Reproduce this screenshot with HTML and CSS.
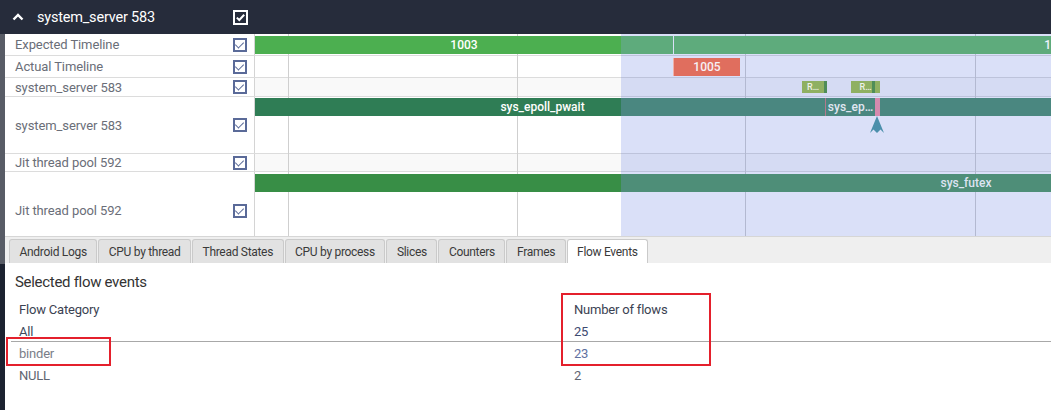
FILE: index.html
```html
<!DOCTYPE html>
<html>
<head>
<meta charset="utf-8">
<link rel="stylesheet" href="styles.css">
</head>
<body>
<div class="app">
  <div class="group-header">
    <div class="gh-label">
      <svg class="chev" width="12" height="8" viewBox="0 0 12 8"><polyline points="1.5,6.5 6,2 10.5,6.5" fill="none" stroke="#fff" stroke-width="2.4"/></svg>
      <span class="gh-title">system_server 583</span>
      <svg class="gh-check" width="15" height="15" viewBox="0 0 15 15"><rect x="1" y="1" width="13" height="13" fill="none" stroke="#fff" stroke-width="2"/><polyline points="3.8,7.6 6.3,10 11.2,4.8" fill="none" stroke="#fff" stroke-width="2"/></svg>
    </div>
  </div>
  <div class="body">
    <div class="edge"></div>
    <div class="main">
      <div class="tracks">
        <div class="row h22">
          <div class="label"><span>Expected Timeline</span><i class="cb"></i></div>
          <div class="canvas">
            <div class="slice s-exp1" style="left:0;width:418px">1003</div>
            <div class="slice s-exp2" style="left:419px;width:768px">1004</div>
          </div>
        </div>
        <div class="row h22">
          <div class="label"><span>Actual Timeline</span><i class="cb"></i></div>
          <div class="canvas">
            <div class="slice s-act" style="left:418px;width:67px">1005</div>
          </div>
        </div>
        <div class="row h19 small">
          <div class="label"><span>system_server 583</span><i class="cb"></i></div>
          <div class="canvas">
            <div class="slice s-run" style="left:547px;width:25px">R…</div>
            <div class="slice s-run s-run2" style="left:596px;width:29px">R…</div>
          </div>
        </div>
        <div class="row h57">
          <div class="label"><span>system_server 583</span><i class="cb"></i></div>
          <div class="canvas">
            <div class="slice s-epoll" style="left:-15px;width:585px">sys_epoll_pwait</div>
            <div class="slice s-teal s-ep2" style="left:570px;width:50px">sys_ep…</div>
            <div class="slice s-pink" style="left:620px;width:5px"></div>
            <div class="slice s-teal" style="left:625px;width:300px"></div>
            <svg class="flow-arrow" width="14" height="18" viewBox="0 0 14 18"><path d="M7 0 L14 17 L10.5 13.5 L7 17 L3.5 13.5 L0 17 Z" fill="#4b8fab"/></svg>
          </div>
        </div>
        <div class="row h18 small">
          <div class="label"><span>Jit thread pool 592</span><i class="cb"></i></div>
          <div class="canvas"></div>
        </div>
        <div class="row h64">
          <div class="label low"><span>Jit thread pool 592</span><i class="cb"></i></div>
          <div class="canvas">
            <div class="slice s-futex" style="left:0;width:1422px">sys_futex</div>
          </div>
        </div>
        <div class="lanes">
          <div class="gridline" style="left:33px"></div>
          <div class="gridline" style="left:262px"></div>
          <div class="gridline" style="left:490px"></div>
          <div class="gridline" style="left:720px"></div>
          <div class="selection"></div>
        </div>
      </div>
      <div class="panel">
        <div class="tabbar">
          <div class="tab">Android Logs</div>
          <div class="tab">CPU by thread</div>
          <div class="tab">Thread States</div>
          <div class="tab">CPU by process</div>
          <div class="tab">Slices</div>
          <div class="tab">Counters</div>
          <div class="tab">Frames</div>
          <div class="tab active">Flow Events</div>
        </div>
        <div class="content">
          <div class="title">Selected flow events</div>
          <div class="table">
            <div class="tr th"><div class="c1">Flow Category</div><div class="c2">Number of flows</div></div>
            <div class="tr r-all"><div class="c1">All</div><div class="c2 n1">25</div></div>
            <div class="tr r-binder"><div class="c1">binder</div><div class="c2 n2">23</div></div>
            <div class="tr r-null"><div class="c1">NULL</div><div class="c2">2</div></div>
          </div>
        </div>
      </div>
    </div>
  </div>
  <div class="mark mark1"></div>
  <div class="mark mark2"></div>
</div>
</body>
</html>
```

FILE: styles.css
```css
* { box-sizing: border-box; }
html, body { margin: 0; padding: 0; }
body {
  width: 1051px;
  height: 410px;
  overflow: hidden;
  font-family: Roboto, "Liberation Sans", sans-serif;
  background: #fff;
}
.app { position: relative; width: 1051px; height: 410px; }

.group-header {
  height: 34px;
  background: #262c3b;
  display: flex;
  align-items: center;
}
.gh-label {
  width: 254px;
  display: flex;
  align-items: center;
  height: 34px;
  position: relative;
}
.chev { margin-left: 12px; margin-right: 13px; }
.gh-title { color: #fff; font-size: 14.5px; letter-spacing: -0.2px; flex: 1; }
.gh-check { margin-right: 6px; }

.body { display: flex; height: 376px; }
.edge {
  width: 5px;
  background: linear-gradient(#585c66 0, #585c66 230px, #1c2230 230px);
}
.main { flex: 1; display: flex; flex-direction: column; }

.tracks { position: relative; z-index: 0; }
.row {
  display: flex;
  border-bottom: 1px solid #dcdcdc;
}
.h22 { height: 22px; }
.h19 { height: 19px; }
.h57 { height: 57px; }
.h18 { height: 18px; }
.h64 { height: 64px; border-bottom: none; }
.label {
  width: 250px;
  display: flex;
  align-items: center;
  padding-left: 10px;
  padding-right: 7px;
  border-right: 1px solid #d4d4d4;
  background: #fff;
  font-size: 13px;
  color: #6a6e78;
  letter-spacing: -0.1px;
}
.label span { flex: 1; white-space: nowrap; }
.label.low { padding-top: 13px; }
.cb {
  width: 14px;
  height: 14px;
  border: 2px solid #5a6a98;
  position: relative;
  background: #fff;
}
.cb::after {
  content: "";
  position: absolute;
  left: 2px;
  top: 0px;
  width: 4px;
  height: 7px;
  border-right: 1.6px solid #5a6a98;
  border-bottom: 1.6px solid #5a6a98;
  transform: rotate(45deg);
}
.canvas {
  flex: 1;
  position: relative;
  overflow: hidden;
}
.small .canvas { background: #f9f9f9; }

.slice {
  position: absolute;
  top: 2px;
  height: 18px;
  display: flex;
  align-items: center;
  justify-content: center;
  color: #fff;
  font-size: 12px;
  font-weight: 500;
  white-space: nowrap;
  overflow: hidden;
  z-index: 2;
}
.s-exp1 { background: linear-gradient(90deg, #4caf50 0, #4caf50 366px, #5eab7c 366px); }
.s-exp2 { background: #5eab7c; color: #eef2ff; }
.s-act { background: #e06e5e; color: #f6f0f4; border-left: 1px solid #f0b0a8; }
.s-run {
  top: 3px;
  height: 12px;
  font-size: 9px;
  background: #8fb062;
  border-right: 3px solid #4f8d58;
  color: #eef2e8;
}
.s-run2 { border-right: none; box-shadow: inset -5px 0 0 #8fb062, inset -8px 0 0 #4f8d58; }
.h57 .slice { top: 1px; }
.s-epoll { background: linear-gradient(90deg, #2f7d55 0, #2f7d55 381px, #4a8780 381px); padding-left: 20px; }
.s-teal { background: #4a8780; color: #e0e6f2; }
.s-ep2 { border-left: 1px solid #b27a8c; }
.s-pink { background: #d68aae; }
.flow-arrow { position: absolute; left: 615px; top: 19px; z-index: 2; }
.s-futex { background: linear-gradient(90deg, #388e46 0, #388e46 366px, #4e8e78 366px); color: #dde4f2; }

.lanes {
  position: absolute;
  left: 250px;
  right: 0;
  top: 0;
  bottom: 0;
  z-index: 1;
  pointer-events: none;
}
.gridline {
  position: absolute;
  top: 0;
  bottom: 0;
  width: 1px;
  background: #cfcfcf;
}
.selection {
  position: absolute;
  left: 366px;
  right: 0;
  top: 0;
  bottom: 0;
  background: rgba(60, 90, 220, 0.19);
}

.panel { flex: 1; display: flex; flex-direction: column; }
.tabbar {
  height: 27px;
  background: #efefef;
  border-top: 1px solid #d6d6d6;
  display: flex;
  align-items: flex-end;
  padding-left: 4px;
  gap: 1px;
}
.tab {
  height: 24px;
  padding: 0 9.5px;
  display: flex;
  align-items: center;
  background: #e2e2e2;
  border: 1px solid #cacaca;
  border-bottom: none;
  border-radius: 3px 3px 0 0;
  font-size: 12px;
  letter-spacing: -0.3px;
  color: #3a3a3a;
}
.tab.active { background: #fff; }
.content { flex: 1; padding: 10px 0 0 10px; background: #fff; }
.title { font-size: 15px; line-height: 18px; color: #333; letter-spacing: -0.3px; }
.table { margin-top: 7px; margin-left: -4px; }
.tr { display: flex; height: 22px; align-items: center; font-size: 13px; letter-spacing: -0.2px; }
.th { height: 23px; color: #3b4252; }
.c1 { width: 555px; padding-left: 8px; }
.c2 { padding-left: 8px; }
.r-all { height: 21px; color: #3d4a5c; border-bottom: 1px solid #a8a8a8; padding-top: 1px; }
.r-binder { color: #7a7e88; }
.r-null { color: #5f6571; }
.n1 { color: #3d4a70; }
.n2 { color: #6070a0; }

.mark {
  position: absolute;
  border: 2px solid #e4202c;
  z-index: 5;
}
.mark1 { left: 6px; top: 337px; width: 105px; height: 29px; }
.mark2 { left: 561px; top: 293px; width: 150px; height: 73px; }
```
